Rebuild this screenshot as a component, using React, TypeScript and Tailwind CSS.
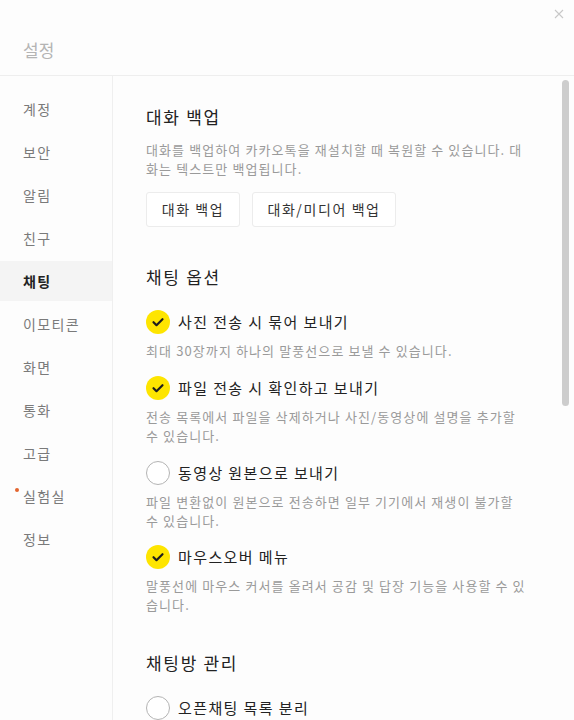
import React from "react";

const FONT = "font-['Noto_Sans_CJK_KR','Noto_Sans',sans-serif]";

const MENU = [
  "계정",
  "보안",
  "알림",
  "친구",
  "채팅",
  "이모티콘",
  "화면",
  "통화",
  "고급",
  "실험실",
  "정보",
];

function Check({ checked }: { checked: boolean }) {
  if (!checked) {
    return (
      <span className="block size-[24px] shrink-0 rounded-full border border-[#b4b4b4] bg-white" />
    );
  }
  return (
    <span className="flex size-[24px] shrink-0 items-center justify-center rounded-full bg-[#fee500]">
      <svg viewBox="0 0 24 24" className="size-[24px]" fill="none" stroke="#1e1e1e" strokeWidth="2.2" strokeLinecap="round" strokeLinejoin="round">
        <path d="M7.5 12.2l3 3 6-6" />
      </svg>
    </span>
  );
}

function Option({
  checked,
  label,
  lines,
  className = "",
}: {
  checked: boolean;
  label: string;
  lines?: string[];
  className?: string;
}) {
  return (
    <div className={className}>
      <div className="flex items-center gap-[8px]">
        <Check checked={checked} />
        <span className="text-[15px] leading-[24px] tracking-[1.4px] text-[#222]">{label}</span>
      </div>
      {lines && (
        <p className="mt-[7px] text-[13px] leading-[19px] tracking-[1.1px] whitespace-nowrap text-[#9a9a9a]">
          {lines.map((l, i) => (
            <span key={i} className="block">
              {l}
            </span>
          ))}
        </p>
      )}
    </div>
  );
}

export default function App() {
  return (
    <div className={`relative flex h-[720px] w-[574px] flex-col overflow-hidden bg-[#fdfdfd] ${FONT}`}>
      <div className="relative h-[76px] shrink-0 border-b border-[#eeeeee] pl-[23px] pt-[38px]">
        <h1 className="text-[17px] leading-[24px] text-[#b4b4b4]">설정</h1>
        <svg viewBox="0 0 10 10" className="absolute right-[10px] top-[9px] size-[10px]" stroke="#c8c8c8" strokeWidth="1.1">
          <path d="M1 1l8 8M9 1l-8 8" />
        </svg>
      </div>

      <div className="flex flex-1 overflow-hidden">
        <nav className="flex w-[113px] shrink-0 flex-col gap-[3px] border-r border-[#efefef] pt-[13px]">
          {MENU.map((m) => {
            const active = m === "채팅";
            return (
              <div
                key={m}
                className={`relative flex h-[40px] items-center pl-[23px] text-[14px] tracking-[1.4px] ${
                  active ? "bg-[#f4f4f4] font-bold text-[#222]" : "text-[#7a7a7a]"
                }`}
              >
                {m === "실험실" && (
                  <span className="absolute left-[15px] top-[12px] size-[4px] rounded-full bg-[#e3652f]" />
                )}
                {m}
              </div>
            );
          })}
        </nav>

        <main className="relative flex-1 pl-[33px] pt-[29px]">
          <h2 className="text-[17px] leading-[24px] tracking-[1.7px] text-[#222]">대화 백업</h2>
          <p className="mt-[11px] whitespace-nowrap text-[13px] leading-[19px] tracking-[1.1px] text-[#9a9a9a]">
            <span className="block">대화를 백업하여 카카오톡을 재설치할 때 복원할 수 있습니다. 대</span>
            <span className="block">화는 텍스트만 백업됩니다.</span>
          </p>
          <div className="mt-[14px] flex gap-[12px]">
            <button className="h-[35px] w-[94px] rounded-[3px] border border-[#ececec] bg-white text-[14px] tracking-[1.6px] text-[#333]">
              대화 백업
            </button>
            <button className="h-[35px] w-[144px] rounded-[3px] border border-[#ececec] bg-white text-[14px] tracking-[1.6px] text-[#333]">
              대화/미디어 백업
            </button>
          </div>

          <h2 className="mt-[38px] text-[17px] leading-[24px] tracking-[1.7px] text-[#222]">채팅 옵션</h2>
          <Option
            className="mt-[21px]"
            checked
            label="사진 전송 시 묶어 보내기"
            lines={["최대 30장까지 하나의 말풍선으로 보낼 수 있습니다."]}
          />
          <Option
            className="mt-[16px]"
            checked
            label="파일 전송 시 확인하고 보내기"
            lines={["전송 목록에서 파일을 삭제하거나 사진/동영상에 설명을 추가할", "수 있습니다."]}
          />
          <Option
            className="mt-[16px]"
            checked={false}
            label="동영상 원본으로 보내기"
            lines={["파일 변환없이 원본으로 전송하면 일부 기기에서 재생이 불가할", "수 있습니다."]}
          />
          <Option
            className="mt-[15px]"
            checked
            label="마우스오버 메뉴"
            lines={["말풍선에 마우스 커서를 올려서 공감 및 답장 기능을 사용할 수 있", "습니다."]}
          />

          <h2 className="mt-[37px] text-[17px] leading-[24px] tracking-[1.7px] text-[#222]">채팅방 관리</h2>
          <Option className="mt-[21px]" checked={false} label="오픈채팅 목록 분리" />

          <div className="absolute right-[5px] top-[4px] h-[326px] w-[7px] rounded-full bg-[#cdcdcd]" />
        </main>
      </div>
    </div>
  );
}
